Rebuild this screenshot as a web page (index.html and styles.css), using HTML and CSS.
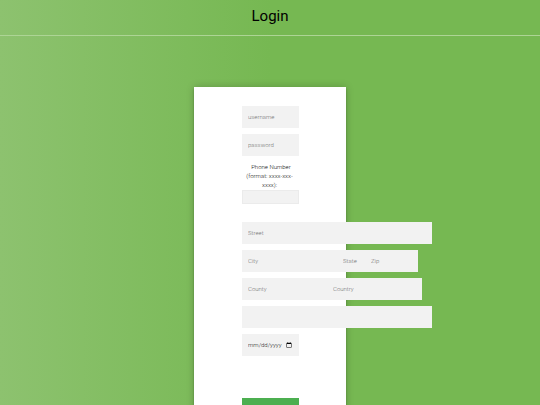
FILE: index.html
```html
<!DOCTYPE html>
<html lang="en">
<head>
    <meta charset="UTF-8">
    <meta name="viewport" content="width=device-width, initial-scale=1.0">
    <title>Login</title>
    <link rel="stylesheet" href="styles.css">
</head>
<body>

    <header class="page-header">
        <h1>Login</h1>
    </header>

    <main class="login-page">
        <form class="form">
            <input type="text" name="username" placeholder="username" aria-label="username">
            <input type="password" name="password" placeholder="password" aria-label="password">

            <div class="phone">
                <label for="phone">&nbsp; Phone Number (format: xxxx-xxx-xxxx):</label>
                <input type="tel" id="phone" name="phone">
            </div>

            <!-- Address -->
            <div class="row">
                <input type="text" class="street" name="street" placeholder="Street" aria-label="Street">
            </div>
            <div class="row">
                <input type="text" class="city" name="city" placeholder="City" aria-label="City">
                <input type="text" class="state" name="state" placeholder="State" aria-label="State">
                <input type="text" class="zip" name="zip" placeholder="Zip" aria-label="Zip">
            </div>
            <div class="row">
                <input type="text" class="county" name="county" placeholder="County" aria-label="County">
                <input type="text" class="country" name="country" placeholder="Country" aria-label="Country">
            </div>
            <div class="row">
                <input type="email" class="street" name="email" aria-label="Email">
            </div>

            <input type="date" name="birthday" aria-label="Birthday">

            <button type="submit">Login</button>
        </form>
    </main>

</body>
</html>
```

FILE: styles.css
```css
* {
    box-sizing: border-box;
}

body {
    margin: 0;
    min-height: 100vh;
    font-family: Roboto, sans-serif;
    font-size: 6px;
    color: #333;
    background: linear-gradient(to right, #8DC26F, #76b852 50%);
}

.page-header {
    padding: 7px 0 9px;
    border-bottom: 1px solid #add495;
    text-align: center;
}

h1 {
    margin: 0;
    font-size: 15px;
    line-height: 19px;
    font-weight: 400;
    color: #000;
}

.login-page {
    padding: 51px 0 0;
}

.form {
    display: flex;
    flex-direction: column;
    gap: 6px;
    width: 152px;
    margin: 0 auto;
    padding: 19px 47px 19px 48px;
    background: #fff;
    box-shadow: 0 0 8px rgba(0, 0, 0, 0.2), 0 2px 2px rgba(0, 0, 0, 0.24);
    text-align: center;
}

input {
    width: 100%;
    height: 22px;
    margin: 0;
    padding: 0 6px 1px;
    border: 0;
    border-radius: 0;
    outline: 0;
    background: #f2f2f2;
    color: #222;
    font-family: inherit;
    font-size: 6px;
    font-weight: 300;
}

input::placeholder {
    color: #757575;
}

.phone {
    margin-bottom: 12px;
}

.phone label {
    display: block;
    padding: 0 2px 1px 0;
    line-height: 9px;
    font-weight: 300;
    color: #111;
}

.phone input {
    display: block;
    height: 14px;
    border: 1px solid #ebebeb;
}

/* address rows run past the card on the right */
.row {
    display: flex;
}

.row input {
    flex: none;
}

.row .street {
    width: 190px;
}

.row .city {
    width: 95px;
}

.row .state {
    width: 28px;
}

.row .zip {
    width: 53px;
}

.row .county {
    width: 85px;
}

.row .country {
    width: 95px;
}

input[type="date"]::-webkit-datetime-edit-text,
input[type="date"]::-webkit-datetime-edit-month-field,
input[type="date"]::-webkit-datetime-edit-day-field,
input[type="date"]::-webkit-datetime-edit-year-field {
    padding: 0;
}

input[type="date"]::-webkit-calendar-picker-indicator {
    width: 6px;
    height: 6px;
    margin: 0 1px 0 0;
    padding: 0;
}

button {
    width: 100%;
    padding: 16px 0 8px;
    margin-top: 36px;
    border: 0;
    background: #4CAF50;
    color: #fff;
    font-family: inherit;
    font-size: 6px;
    text-transform: uppercase;
    cursor: pointer;
}
```
